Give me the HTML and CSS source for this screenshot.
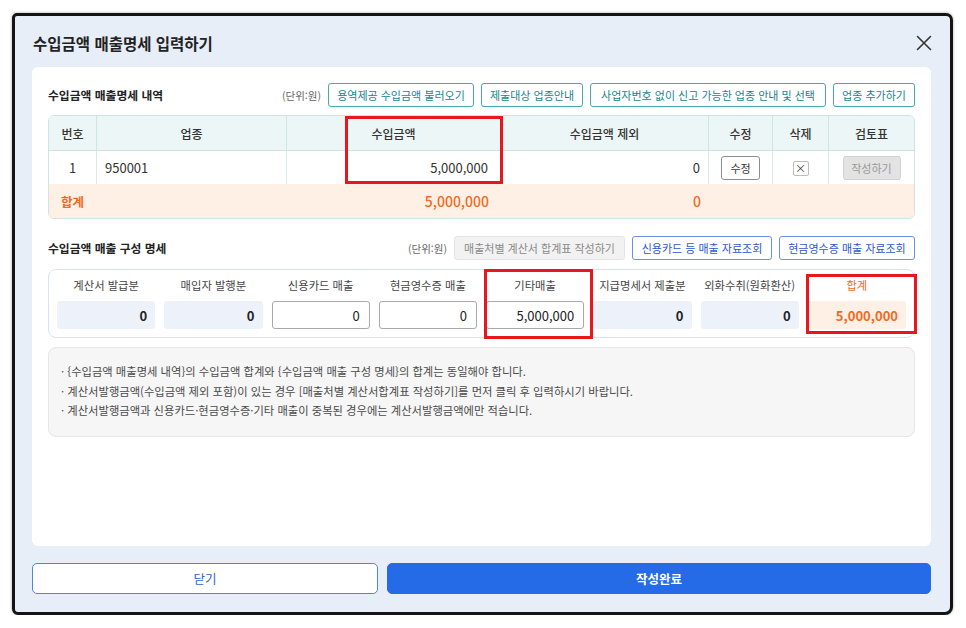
FILE: index.html
```html
<!DOCTYPE html>
<html lang="ko">
<head>
<meta charset="utf-8">
<title>수입금액 매출명세 입력하기</title>
<link rel="stylesheet" href="styles.css">
</head>
<body>
<div class="frame">
  <div class="modal-head">
    <h1 class="modal-title">수입금액 매출명세 입력하기</h1>
    <button class="close-btn" type="button" aria-label="닫기">
      <svg width="16" height="16" viewBox="0 0 16 16"><path d="M1.5 1.5 L14.5 14.5 M14.5 1.5 L1.5 14.5" stroke="#333" stroke-width="1.6" fill="none" stroke-linecap="round"/></svg>
    </button>
  </div>

  <div class="card">
    <div class="toolbar">
      <h2 class="sec-title">수입금액 매출명세 내역</h2>
      <div class="tools">
        <span class="unit">(단위:원)</span>
        <button class="btn btn-teal w-load" type="button">용역제공 수입금액 불러오기</button>
        <button class="btn btn-teal w-guide" type="button">제출대상 업종안내</button>
        <button class="btn btn-teal w-nobiz" type="button">사업자번호 없이 신고 가능한 업종 안내 및 선택</button>
        <button class="btn btn-teal w-add" type="button">업종 추가하기</button>
      </div>
    </div>

    <div class="table-wrap">
      <table class="grid">
        <colgroup>
          <col class="c-no"><col class="c-biz"><col class="c-amt"><col class="c-ex"><col class="c-edit"><col class="c-del"><col class="c-rev">
        </colgroup>
        <thead>
          <tr>
            <th>번호</th><th>업종</th><th>수입금액</th><th>수입금액 제외</th><th>수정</th><th>삭제</th><th>검토표</th>
          </tr>
        </thead>
        <tbody>
          <tr class="row">
            <td class="center">1</td>
            <td class="left">950001</td>
            <td class="num num-amt">5,000,000</td>
            <td class="num">0</td>
            <td class="center"><button class="btn-edit" type="button">수정</button></td>
            <td class="center"><button class="btn-del" type="button">×</button></td>
            <td class="center"><button class="btn-write" type="button" disabled>작성하기</button></td>
          </tr>
          <tr class="total">
            <td class="total-label" colspan="2">합계</td>
            <td class="num num-amt">5,000,000</td>
            <td class="num">0</td>
            <td></td><td></td><td></td>
          </tr>
        </tbody>
      </table>
      <div class="mark mark-income"></div>
    </div>

    <div class="toolbar toolbar-2">
      <h2 class="sec-title">수입금액 매출 구성 명세</h2>
      <div class="tools">
        <span class="unit">(단위:원)</span>
        <button class="btn btn-off w-bill" type="button">매출처별 계산서 합계표 작성하기</button>
        <button class="btn btn-blue w-card" type="button">신용카드 등 매출 자료조회</button>
        <button class="btn btn-blue w-cash" type="button">현금영수증 매출 자료조회</button>
      </div>
    </div>

    <div class="comp">
      <div class="comp-item"><span class="comp-label">계산서 발급분</span><input class="field field-ro" value="0" readonly></div>
      <div class="comp-item"><span class="comp-label">매입자 발행분</span><input class="field field-ro" value="0" readonly></div>
      <div class="comp-item"><span class="comp-label">신용카드 매출</span><input class="field field-in" value="0"></div>
      <div class="comp-item"><span class="comp-label">현금영수증 매출</span><input class="field field-in" value="0"></div>
      <div class="comp-item"><span class="comp-label">기타매출</span><input class="field field-in" value="5,000,000"></div>
      <div class="comp-item"><span class="comp-label">지급명세서 제출분</span><input class="field field-ro" value="0" readonly></div>
      <div class="comp-item"><span class="comp-label">외화수취(원화환산)</span><input class="field field-ro" value="0" readonly></div>
      <div class="comp-item"><span class="comp-label comp-label-sum">합계</span><input class="field field-sum" value="5,000,000" readonly></div>
      <div class="mark mark-etc"></div>
      <div class="mark mark-sum"></div>
    </div>

    <ul class="notes">
      <li>· {수입금액 매출명세 내역}의 수입금액 합계와 {수입금액 매출 구성 명세}의 합계는 동일해야 합니다.</li>
      <li>· 계산서발행금액(수입금액 제외 포함)이 있는 경우 [매출처별 계산서합계표 작성하기]를 먼저 클릭 후 입력하시기 바랍니다.</li>
      <li>· 계산서발행금액과 신용카드·현금영수증·기타 매출이 중복된 경우에는 계산서발행금액에만 적습니다.</li>
    </ul>
  </div>

  <div class="modal-foot">
    <button class="foot-btn foot-close" type="button">닫기</button>
    <button class="foot-btn foot-done" type="button">작성완료</button>
  </div>
</div>
</body>
</html>
```

FILE: styles.css
```css
* { box-sizing: border-box; }

html, body {
  margin: 0;
  padding: 0;
  background: #ffffff;
}

body {
  font-family: "Noto Sans CJK KR", "Noto Sans", sans-serif;
  color: #222;
}

button, input {
  font-family: "Noto Sans CJK KR", "Noto Sans", sans-serif;
}

.frame {
  margin: 13px 0 0 12px;
  width: 941px;
  height: 602px;
  border: 3px solid #141414;
  border-radius: 5px 7px 8px 6px;
  background: #e8eef8;
  box-shadow: 0 0 3px rgba(0, 0, 0, 0.35);
  display: flex;
  flex-direction: column;
}

/* header */
.modal-head {
  display: flex;
  justify-content: space-between;
  align-items: center;
  padding: 17px 18px 14px 18px;
}

.modal-title {
  margin: 0;
  font-size: 15.5px;
  line-height: 20px;
  font-weight: 700;
  color: #222;
}

.close-btn {
  border: 0;
  background: transparent;
  padding: 0;
  width: 16px;
  height: 16px;
  display: flex;
  cursor: pointer;
}

/* card */
.card {
  flex: 1;
  margin: 0 19px 0 17px;
  background: #ffffff;
  border-radius: 6px;
  padding: 16px 16px 0 16px;
}

.toolbar {
  display: flex;
  justify-content: space-between;
  align-items: center;
  height: 24px;
}

.toolbar-2 {
  margin-top: 17px;
}

.sec-title {
  margin: 0;
  font-size: 11.8px;
  line-height: 16px;
  font-weight: 700;
  color: #222;
}

.tools {
  display: flex;
  align-items: center;
  gap: 7px;
}

.unit {
  font-size: 10.5px;
  color: #666;
}

.btn {
  height: 24px;
  padding: 0;
  font-size: 11px;
  border-radius: 3px;
  background: #ffffff;
  white-space: nowrap;
  text-align: center;
}

.btn-teal {
  border: 1px solid #46a9ae;
  color: #15868b;
}

.btn-blue {
  border: 1px solid #6b8ee8;
  color: #2f56cf;
}

.btn-off {
  border: 1px solid #e3e3e3;
  background: #f2f2f2;
  color: #8a8a8a;
}

.w-load { width: 146px; }
.w-guide { width: 102px; }
.w-nobiz { width: 236px; }
.w-add { width: 82px; }
.w-bill { width: 171px; }
.w-card { width: 140px; }
.w-cash { width: 136px; }

/* table */
.table-wrap {
  position: relative;
  margin-top: 8px;
  border: 1px solid #cfe4e4;
  border-radius: 6px;
}

.grid {
  width: 100%;
  border-collapse: separate;
  border-spacing: 0;
  table-layout: fixed;
  font-size: 13px;
  color: #333;
}

.c-no { width: 48px; }
.c-biz { width: 190px; }
.c-amt { width: 214px; }
.c-ex { width: 208px; }
.c-edit { width: 64px; }
.c-del { width: 56px; }
.c-rev { width: 85px; }

.grid th {
  height: 35px;
  padding: 0;
  background: #edf6f6;
  border-bottom: 1px solid #cfe4e4;
  border-right: 1px solid #cfe4e4;
  font-size: 12px;
  font-weight: 500;
  color: #333;
}

.grid th:first-child { border-top-left-radius: 5px; }
.grid th:last-child { border-right: 0; border-top-right-radius: 5px; }

.row td {
  height: 33px;
  padding: 0;
  border-right: 1px solid #d8eaea;
  background: #ffffff;
}

.row td:last-child { border-right: 0; }

.center { text-align: center; }
.left { text-align: left; padding-left: 8px !important; }
.num { text-align: right; padding-right: 8px !important; }
.num-amt { padding-right: 12px !important; }

.total td {
  height: 34px;
  padding: 0;
  background: #fff0e5;
  color: #f06a1f;
  font-size: 14px;
  font-weight: 500;
}

.total td:first-child { border-bottom-left-radius: 5px; }
.total td:last-child { border-bottom-right-radius: 5px; }

.total .total-label {
  padding-left: 12px;
  font-size: 12.5px;
  font-weight: 700;
}

.btn-edit {
  width: 39px;
  height: 24px;
  padding: 0;
  border: 1px solid #8c8c8c;
  border-radius: 3px;
  background: #ffffff;
  font-size: 11px;
  color: #333;
}

.btn-del {
  width: 16px;
  height: 15px;
  padding: 0;
  border: 1px solid #bdbdbd;
  border-radius: 2px;
  background: #ffffff;
  font-size: 11px;
  line-height: 12px;
  color: #444;
}

.btn-write {
  width: 58px;
  height: 24px;
  padding: 0;
  border: 1px solid #d2d2d2;
  border-radius: 3px;
  background: #e3e3e3;
  font-size: 11px;
  color: #9a9a9a;
}

/* annotation marks */
.mark {
  position: absolute;
  border: 3px solid #e8161f;
  pointer-events: none;
}

.mark-income {
  left: 296px;
  top: 0px;
  width: 158px;
  height: 68px;
}

.mark-etc {
  left: 435px;
  top: -1px;
  width: 109px;
  height: 70px;
}

.mark-sum {
  left: 757px;
  top: 4px;
  width: 111px;
  height: 60px;
}

/* composition */
.comp {
  position: relative;
  margin-top: 9px;
  display: grid;
  grid-template-columns: repeat(8, 1fr);
  column-gap: 9px;
  padding: 6px 8px 8px 8px;
  border: 1px solid #d9e3f3;
  border-radius: 8px;
}

.comp-item {
  display: flex;
  flex-direction: column;
  gap: 7px;
  min-width: 0;
}

.comp-label {
  font-size: 11.3px;
  line-height: 18px;
  text-align: center;
  color: #444;
  white-space: nowrap;
}

.comp-label-sum {
  color: #f06a1f;
}

.field {
  width: 100%;
  height: 28px;
  border-radius: 3px;
  font-size: 13px;
  text-align: right;
  padding: 0 8px 0 0;
  color: #222;
  outline: none;
}

.field-ro {
  border: 0;
  background: #edf2fa;
  font-weight: 700;
}

.field-in {
  border: 1px solid #a9a9a9;
  background: #ffffff;
  font-weight: 400;
  padding-right: 9px;
}

.field-sum {
  border: 0;
  background: #fff0e5;
  color: #f06a1f;
  font-weight: 700;
}

/* notes */
.notes {
  margin: 9px 0 0 0;
  list-style: none;
  padding: 14px 12px 15px 12px;
  background: #f6f6f6;
  border: 1px solid #e6e6e6;
  border-radius: 8px;
}

.notes li {
  font-size: 11.3px;
  line-height: 19.5px;
  color: #4a4a4a;
  white-space: nowrap;
}

/* footer */
.modal-foot {
  display: flex;
  gap: 9px;
  padding: 17px 19px 18px 17px;
}

.foot-btn {
  height: 31px;
  border-radius: 5px;
  font-size: 12.5px;
  padding: 0;
}

.foot-close {
  flex: 0 0 346px;
  border: 1px solid #4d84e8;
  background: #ffffff;
  color: #2c64d8;
}

.foot-done {
  flex: 1;
  border: 1px solid #256be8;
  background: #256be8;
  color: #ffffff;
  font-weight: 700;
}
```
